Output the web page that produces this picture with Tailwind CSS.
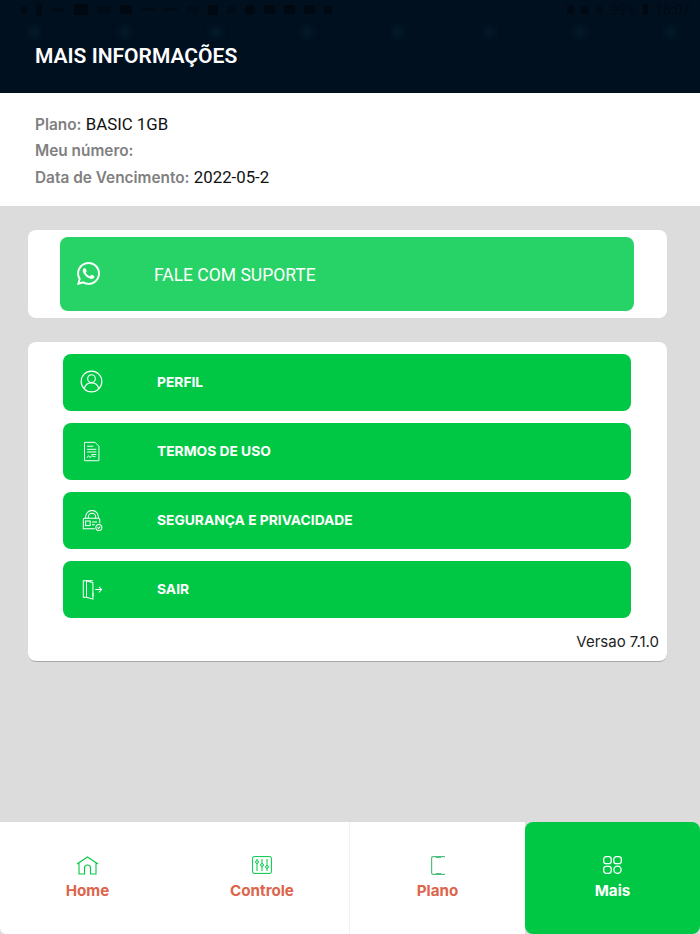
<!doctype html>
<html>

<head>
  <meta charset="UTF-8" />
  <meta name="viewport" content="width=device-width,initial-scale=1" />
  <title>Mais informações</title>
  <script src="https://cdn.jsdelivr.net/npm/@tailwindcss/browser@4"></script>
</head>

<body>
  <main class="flex flex-col w-[700px] h-[934px] overflow-hidden bg-[#dcdcdc] font-['Roboto',sans-serif]">
    <!-- header -->
    <header class="h-[93px] shrink-0 bg-[#00101f] flex flex-col">
      <div class="h-[19px] flex items-center justify-between pl-[21px] pr-[56px] text-[#000a14]">
        <div class="flex items-center gap-[9px]">
          <span class="w-[6px] h-[8px] bg-[#000a14] rounded-[2px]"></span>
          <span class="w-[6px] h-[13px] bg-[#000a14] rounded-[2px]"></span>
          <span class="w-[14px] h-[4px] bg-[#000c18]"></span>
          <span class="w-[14px] h-[11px] bg-[#000812]"></span>
          <span class="w-[14px] h-[8px] bg-[#000c18]"></span>
          <span class="w-[12px] h-[9px] bg-[#000812]"></span>
          <span class="w-[14px] h-[3px] bg-[#000c18]"></span>
          <span class="w-[14px] h-[3px] bg-[#000c18]"></span>
          <span class="w-[12px] h-[7px] bg-[#000c18]"></span>
          <span class="w-[10px] h-[10px] bg-[#000812] rounded-[2px]"></span>
          <span class="w-[9px] h-[8px] bg-[#000c18]"></span>
          <span class="w-[10px] h-[10px] bg-[#000812] rounded-full"></span>
          <span class="w-[11px] h-[9px] bg-[#000812] rounded-[2px]"></span>
          <span class="w-[11px] h-[9px] bg-[#000812] rounded-[2px]"></span>
          <span class="w-[11px] h-[9px] bg-[#000812] rounded-[2px]"></span>
          <span class="w-[8px] h-[8px] bg-[#000812]"></span>
        </div>
        <div class="flex items-center gap-[7px] mr-[-46px] text-[14px] leading-none">
          <span class="w-[7px] h-[9px] bg-[#000a14]"></span>
          <span class="w-[8px] h-[8px] bg-[#000a14]"></span>
          <span class="w-[7px] h-[8px] bg-[#000c18]"></span>
          <span>99%</span>
          <span class="w-[5px] h-[11px] bg-[#000812]"></span>
          <span>18:07</span>
        </div>
      </div>
      <!-- faint dots behind the title -->
      <div class="h-[12px] mt-[7px] flex gap-[79px] pl-[28px]">
        <span class="w-[12px] h-[12px] shrink-0 rounded-full bg-[#031b2b] blur-[3px]"></span>
        <span class="w-[12px] h-[12px] shrink-0 rounded-full bg-[#031b2b] blur-[3px]"></span>
        <span class="w-[12px] h-[12px] shrink-0 rounded-full bg-[#031b2b] blur-[3px]"></span>
        <span class="w-[12px] h-[12px] shrink-0 rounded-full bg-[#031b2b] blur-[3px]"></span>
        <span class="w-[12px] h-[12px] shrink-0 rounded-full bg-[#031b2b] blur-[3px]"></span>
        <span class="w-[12px] h-[12px] shrink-0 rounded-full bg-[#031b2b] blur-[3px]"></span>
        <span class="w-[12px] h-[12px] shrink-0 rounded-full bg-[#031b2b] blur-[3px]"></span>
        <span class="w-[12px] h-[12px] shrink-0 rounded-full bg-[#031b2b] blur-[3px]"></span>
      </div>
      <h1 class="mt-[4px] ml-[35px] text-[21px] leading-[28px] font-semibold text-white">MAIS INFORMAÇÕES</h1>
    </header>

    <!-- plan info -->
    <section class="h-[113px] shrink-0 bg-white pt-[18px] pl-[35px] font-['Inter',sans-serif] text-[15.400px] leading-[26px]">
      <p><span class="font-semibold text-[#808080]">Plano:</span> <span class="font-['Roboto',sans-serif] text-[16.800px] text-[#111]">BASIC 1GB</span></p>
      <p><span class="font-semibold text-[#808080]">Meu número:</span></p>
      <p><span class="font-semibold text-[#808080]">Data de Vencimento:</span> <span class="font-['Roboto',sans-serif] text-[16.800px] text-[#111]">2022-05-2</span></p>
    </section>

    <!-- support -->
    <section class="mt-[24px] mx-[28px] w-[639px] h-[88px] shrink-0 bg-white rounded-[8px] pt-[7px] pl-[32px]">
      <a class="flex items-center w-[574px] h-[74px] bg-[#27d366] rounded-[8px] text-white">
        <svg class="ml-[17px] w-[23px] h-[23px] -mt-[2px]" viewBox="0 0 24 24" fill="#fff">
          <path d="M17.472 14.382c-.297-.149-1.758-.867-2.03-.967-.273-.099-.471-.148-.67.15-.197.297-.767.966-.94 1.164-.173.199-.347.223-.644.075-.297-.15-1.255-.463-2.39-1.475-.883-.788-1.48-1.761-1.653-2.059-.173-.297-.018-.458.13-.606.134-.133.298-.347.446-.52.149-.174.198-.298.298-.497.099-.198.05-.371-.025-.52-.075-.149-.669-1.612-.916-2.207-.242-.579-.487-.5-.669-.51-.173-.008-.371-.01-.57-.01-.198 0-.52.074-.792.372-.272.297-1.04 1.016-1.04 2.479 0 1.462 1.065 2.875 1.213 3.074.149.198 2.096 3.2 5.077 4.487.709.306 1.262.489 1.694.625.712.227 1.36.195 1.871.118.571-.085 1.758-.719 2.006-1.413.248-.694.248-1.289.173-1.413-.074-.124-.272-.198-.57-.347m-5.421 7.403h-.004a9.87 9.87 0 01-5.031-1.378l-.361-.214-3.741.982.998-3.648-.235-.374a9.86 9.86 0 01-1.51-5.26c.001-5.45 4.436-9.884 9.888-9.884 2.64 0 5.122 1.03 6.988 2.898a9.825 9.825 0 012.893 6.994c-.003 5.45-4.437 9.884-9.885 9.884m8.413-18.297A11.815 11.815 0 0012.05 0C5.495 0 .16 5.335.157 11.892c0 2.096.547 4.142 1.588 5.945L.057 24l6.305-1.654a11.882 11.882 0 005.683 1.448h.005c6.554 0 11.89-5.335 11.893-11.893a11.821 11.821 0 00-3.48-8.413z" />
        </svg>
        <span class="ml-[54px] mt-[3px] text-[17.500px] leading-none">FALE COM SUPORTE</span>
      </a>
    </section>

    <!-- menu -->
    <section class="mt-[24px] mx-[28px] w-[639px] h-[320px] shrink-0 bg-white rounded-[8px] border-b border-b-[#a8a8a8] pt-[12px] pl-[35px] font-['Inter',sans-serif]">
      <div class="flex flex-col gap-[12px] w-[568px]">
        <a class="flex items-center h-[57px] bg-[#00c845] rounded-[8px] text-white">
          <svg class="ml-[17px] w-[23px] h-[23px] -mt-[2px]" viewBox="0 0 24 24" fill="none" stroke="#fff" stroke-width="1.200">
            <circle cx="12" cy="12" r="10.800" />
            <circle cx="12" cy="9" r="4" />
            <path d="M4.500 19.500c.8-3.500 3.500-6 7.500-6s6.700 2.500 7.500 6" />
          </svg>
          <span class="ml-[54px] text-[13.800px] font-bold leading-none">PERFIL</span>
        </a>
        <a class="flex items-center h-[57px] bg-[#00c845] rounded-[8px] text-white">
          <svg class="ml-[18px] w-[21px] h-[21px]" viewBox="0 0 24 24" fill="none" stroke="#fff" stroke-width="1.100">
            <path d="M4 1.500h12l4.500 4.500v16.500H4z" />
            <path d="M7 6h7M7 9.500h10.500M7 12.500h10.500M12 15.500h5.500M7 19c1-2.500 2-2.500 2.500-1s1.500 1 2-.5 1.500.5 5 .5" />
          </svg>
          <span class="ml-[55px] text-[13.800px] font-bold leading-none">TERMOS DE USO</span>
        </a>
        <a class="flex items-center h-[57px] bg-[#00c845] rounded-[8px] text-white">
          <svg class="ml-[18px] w-[22px] h-[22px]" viewBox="0 0 24 24" fill="none" stroke="#fff" stroke-width="1.100">
            <path d="M5 9V7.500a7 7 0 0 1 14 0V9M8 9V7.500a4 4 0 0 1 8 0V9" />
            <path d="M15 20.500H2.500V10.500a1.500 1.500 0 0 1 1.500-1.500h15a1.500 1.500 0 0 1 1.500 1.500v4" />
            <rect x="5" y="12" width="5" height="5" />
            <path d="M12 13h5.500M12 16h3" />
            <circle cx="19.500" cy="19" r="3.300" />
            <path d="M18 19l1.200 1.200 1.800-2" />
          </svg>
          <span class="ml-[54px] text-[13.800px] font-bold leading-none">SEGURANÇA E PRIVACIDADE</span>
        </a>
        <a class="flex items-center h-[57px] bg-[#00c845] rounded-[8px] text-white">
          <svg class="ml-[18px] w-[22px] h-[22px]" viewBox="0 0 24 24" fill="none" stroke="#fff" stroke-width="1.100">
            <path d="M13 2H2.500v18H6M6 20V2" />
            <path d="M6 2l7 2v18l-7-2" />
            <path d="M13 15v4M15.500 11.500h7M19.500 8.500l3 3-3 3" />
          </svg>
          <span class="ml-[54px] text-[13.800px] font-bold leading-none">SAIR</span>
        </a>
      </div>
      <p class="mt-[16px] w-[596px] text-right text-[15px] leading-[16px] text-[#222]">Versao 7.1.0</p>
    </section>

    <!-- bottom nav -->
    <nav class="mt-auto h-[112px] shrink-0 grid grid-cols-[175px_175px_175px_175px] font-['Inter',sans-serif] text-[15.200px] font-bold leading-none">
      <a class="flex flex-col items-center pt-[34px] bg-white rounded-bl-[6px] text-[#dc654c]">
        <svg class="w-[23px] h-[19px]" viewBox="0 0 23 19" fill="none" stroke="#00c845" stroke-width="1.100">
          <path d="M1 8 11.500 1 22 8M3 7v11h5.500v-6a3 3 0 0 1 6 0v6H20V7" />
        </svg>
        <span class="mt-[8px]">Home</span>
      </a>
      <a class="flex flex-col items-center pt-[34px] bg-white border-r border-r-[#f2f2f2] text-[#dc654c]">
        <svg class="w-[20px] h-[18px]" viewBox="0 0 20 18" fill="none" stroke="#00c845" stroke-width="1">
          <rect x=".6" y=".6" width="18.800" height="16.800" rx="1.500" />
          <path d="M5 3v12M10 3v12M15 3v12" />
          <circle cx="5" cy="6" r="1.400" fill="#fff" />
          <circle cx="10" cy="9" r="1.400" fill="#fff" />
          <circle cx="15" cy="11" r="1.400" fill="#fff" />
        </svg>
        <span class="mt-[9px]">Controle</span>
      </a>
      <a class="flex flex-col items-center pt-[34px] bg-white text-[#dc654c]">
        <svg class="w-[14px] h-[19px]" viewBox="0 0 14 19" fill="none" stroke="#4fbf80" stroke-width="1.200">
          <path d="M14 .6H2A1.500 1.500 0 0 0 .6 2v15A1.500 1.500 0 0 0 2 18.400h12" />
          <path d="M5 1.500h5M5 17.500h5" />
        </svg>
        <span class="mt-[8px]">Plano</span>
      </a>
      <a class="flex flex-col items-center pt-[34px] bg-[#00c845] rounded-[8px] text-white">
        <svg class="w-[19px] h-[18px]" viewBox="0 0 19 18" fill="none" stroke="#fff" stroke-width="1.300">
          <rect x=".7" y=".7" width="7.500" height="7" rx="2.500" />
          <rect x="10.800" y=".7" width="7.500" height="7" rx="2.500" />
          <rect x=".7" y="10.300" width="7.500" height="7" rx="2.500" />
          <circle cx="14.500" cy="13.800" r="3.600" />
        </svg>
        <span class="mt-[9px]">Mais</span>
      </a>
    </nav>
  </main>
</body>

</html>
